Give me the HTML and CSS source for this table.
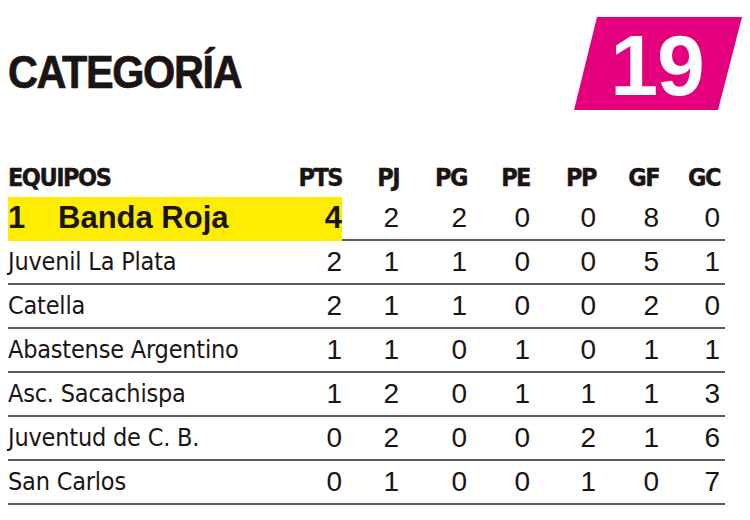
FILE: index.html
```html
<!DOCTYPE html>
<html lang="es">
<head>
<meta charset="utf-8">
<link rel="stylesheet" href="styles.css">
</head>
<body>
<div class="page">
  <header class="top">
    <h1 class="title"><span class="title-text">CATEGORÍA</span></h1>
    <div class="badge"><span class="badge-num">19</span></div>
  </header>
  <table class="standings">
    <colgroup>
      <col class="c-name"><col class="c-pts"><col class="c-pj"><col class="c-pg"><col class="c-pe"><col class="c-pp"><col class="c-gf"><col class="c-gc">
    </colgroup>
    <thead>
      <tr><th class="name">EQUIPOS</th><th>PTS</th><th>PJ</th><th>PG</th><th>PE</th><th>PP</th><th>GF</th><th class="last">GC</th></tr>
    </thead>
    <tbody>
      <tr class="leader"><td class="name hl"><span class="pos">1</span>Banda Roja</td><td class="hl pts">4</td><td>2</td><td>2</td><td>0</td><td>0</td><td>8</td><td class="last">0</td></tr>
      <tr><td class="name">Juvenil La Plata</td><td>2</td><td>1</td><td>1</td><td>0</td><td>0</td><td>5</td><td class="last">1</td></tr>
      <tr><td class="name">Catella</td><td>2</td><td>1</td><td>1</td><td>0</td><td>0</td><td>2</td><td class="last">0</td></tr>
      <tr><td class="name">Abastense Argentino</td><td>1</td><td>1</td><td>0</td><td>1</td><td>0</td><td>1</td><td class="last">1</td></tr>
      <tr><td class="name">Asc. Sacachispa</td><td>1</td><td>2</td><td>0</td><td>1</td><td>1</td><td>1</td><td class="last">3</td></tr>
      <tr><td class="name">Juventud de C. B.</td><td>0</td><td>2</td><td>0</td><td>0</td><td>2</td><td>1</td><td class="last">6</td></tr>
      <tr><td class="name">San Carlos</td><td>0</td><td>1</td><td>0</td><td>0</td><td>1</td><td>0</td><td class="last">7</td></tr>
    </tbody>
  </table>
</div>
</body>
</html>
```
FILE: styles.css
```css
* { box-sizing: border-box; }
html, body { margin: 0; padding: 0; background: #fff; }
body { color: #1a1414; font-family: "Liberation Sans", Arial, sans-serif; }
.page { width: 750px; height: 520px; padding: 0 8px; }

.top {
  display: flex;
  justify-content: space-between;
  align-items: flex-start;
  height: 150px;
}
.title {
  margin: 0;
  padding-top: 46px;
  font-family: "Liberation Sans", Arial, sans-serif;
  font-weight: 700;
  font-size: 46px;
  line-height: 52px;
  color: #1a1414;
}
.title-text {
  display: inline-block;
  letter-spacing: -1.5px;
  -webkit-text-stroke: 0.7px #1a1414;
  transform: scaleX(0.9);
  transform-origin: left center;
}
.badge {
  margin-top: 17px;
  width: 168px;
  height: 93px;
  background: #e4007c;
  clip-path: polygon(23px 0, 100% 0, calc(100% - 24px) 100%, 0 100%);
  display: flex;
  justify-content: center;
  align-items: center;
}
.badge-num {
  color: #fff;
  font-weight: 700;
  font-size: 86px;
  line-height: 1;
  letter-spacing: -1px;
  padding-right: 2px;
  margin-top: 2px;
}

.standings {
  border-collapse: collapse;
  table-layout: fixed;
  width: 717px;
}
.c-name { width: 284px; }
.c-pts { width: 50px; }
.c-pj { width: 57px; }
.c-pg { width: 68px; }
.c-pe { width: 63px; }
.c-pp { width: 66px; }
.c-gf { width: 63px; }
.c-gc { width: 66px; }

.standings th {
  font-family: "DejaVu Sans Condensed", "DejaVu Sans", sans-serif;
  font-stretch: condensed;
  font-weight: 700;
  font-size: 25px;
  letter-spacing: -1.5px;
  -webkit-text-stroke: 0.4px #1a1414;
  line-height: 30px;
  padding: 0 0 4px 0;
  text-align: right;
  white-space: nowrap;
  height: 47px;
  vertical-align: bottom;
}
.standings th.name { text-align: left; }
.standings th.last, .standings td.last { padding-right: 5px; }

.standings td {
  height: 44px;
  padding: 0;
  border-bottom: 2px solid #5a5a5a;
  text-align: right;
  font-family: "Liberation Sans", Arial, sans-serif;
  font-size: 28px;
  line-height: 42px;
  color: #1a1414;
  vertical-align: middle;
  white-space: nowrap;
}
.standings td.name {
  text-align: left;
  font-family: "DejaVu Sans Condensed", "DejaVu Sans", sans-serif;
  font-stretch: condensed;
  font-size: 25px;
  letter-spacing: -0.2px;
}
.standings tr.leader td { height: 42px; }
.standings td.hl {
  background: #ffed00;
  border-bottom-color: #ffed00;
}
.standings tr.leader td.name {
  font-family: "Liberation Sans", Arial, sans-serif;
  font-stretch: normal;
  font-weight: 700;
  font-size: 31px;
  letter-spacing: 0;
}
.pos { display: inline-block; width: 50px; }
.standings td.pts { font-weight: 700; font-size: 31px; }
```
